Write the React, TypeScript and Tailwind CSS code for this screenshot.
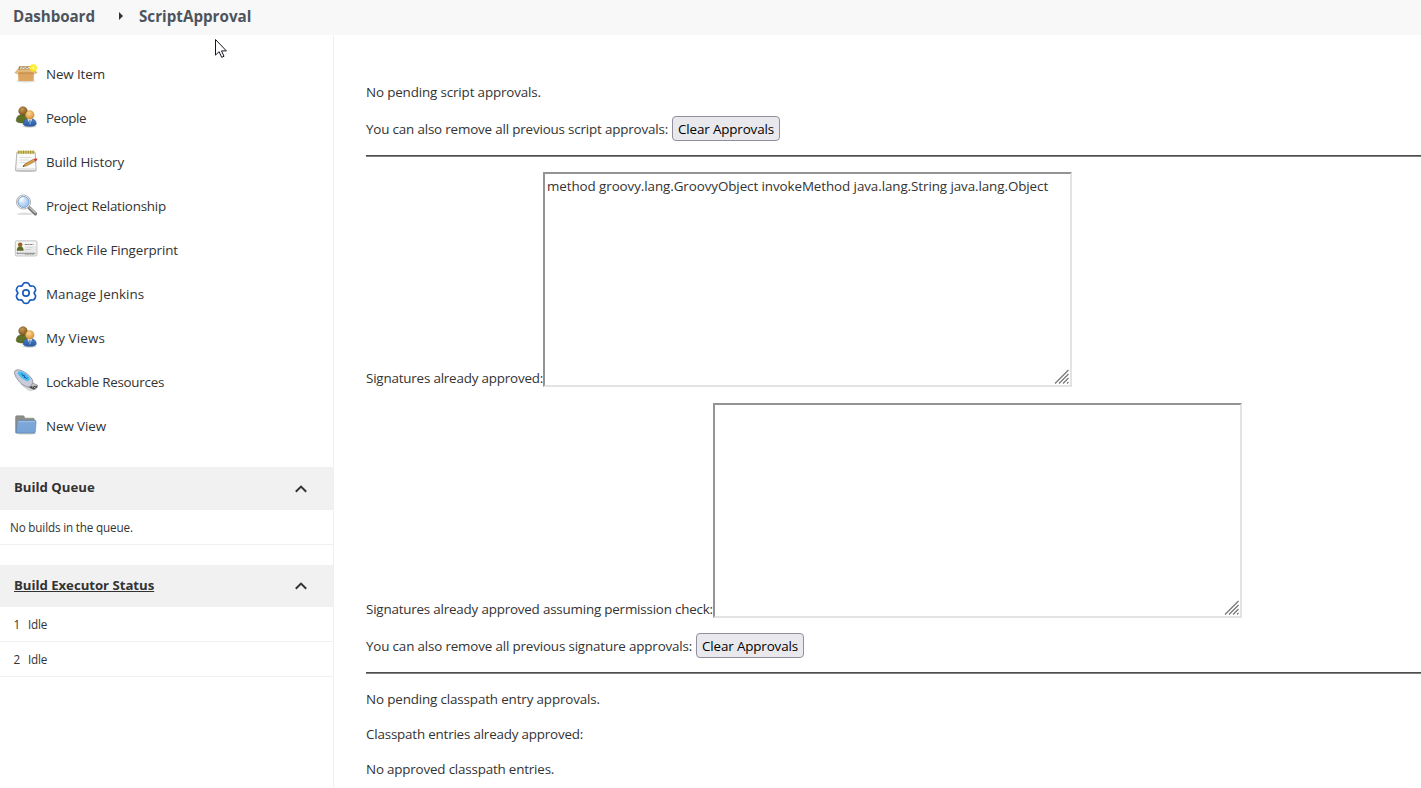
import type { ReactNode } from "react";

function Svg({ children }: { children: ReactNode }) {
  return (
    <svg width="24" height="24" viewBox="0 0 24 24" fill="none" className="shrink-0">
      {children}
    </svg>
  );
}

function BoxIcon() {
  return (
    <Svg>
      <defs>
        <linearGradient id="box" x1="0" y1="0" x2="0" y2="1">
          <stop offset="0" stopColor="#bd8039" />
          <stop offset="0.35" stopColor="#dba563" />
          <stop offset="1" stopColor="#dda75d" />
        </linearGradient>
        <radialGradient id="glow">
          <stop offset="0" stopColor="#fffbb0" />
          <stop offset="0.35" stopColor="#fff04a" />
          <stop offset="0.75" stopColor="#ffe800" stopOpacity="0.8" />
          <stop offset="1" stopColor="#ffe800" stopOpacity="0" />
        </radialGradient>
      </defs>
      <ellipse cx="12" cy="20.200" rx="9.500" ry="1.200" fill="#000" opacity="0.14" />
      <path d="M5.200 5.300h13.600l1.500 4H3.700z" fill="#b9853f" />
      <path d="M6.700 5.900h10.600l.8 2.700H5.900z" fill="#e6e2d5" />
      <path d="M7.500 7.500l2-1.200 1.600 1.200 2-1.200 1.800 1.200" stroke="#75684f" strokeWidth="0.7" />
      <path d="M4 10.500h16l-.3 8.800a.8.800 0 0 1-.8.700H5.100a.8.800 0 0 1-.8-.7z" fill="url(#box)" />
      <path d="M3.800 8.500h16.400l3 3.300-2.800 1-1.800-1.400H5.400l-1.800 1.400-2.800-1z" fill="#e5b97d" stroke="#c48f4b" strokeWidth="0.4" />
      <circle cx="19.300" cy="6.900" r="4.300" fill="url(#glow)" />
    </Svg>
  );
}

function PeopleIcon() {
  return (
    <Svg>
      <defs>
        <radialGradient id="headBack" cx="0.4" cy="0.3" r="0.7">
          <stop offset="0" stopColor="#c39a54" />
          <stop offset="1" stopColor="#7e541b" />
        </radialGradient>
        <radialGradient id="headFront" cx="0.4" cy="0.3" r="0.7">
          <stop offset="0" stopColor="#ffd88f" />
          <stop offset="1" stopColor="#d8913a" />
        </radialGradient>
        <linearGradient id="suit" x1="0" y1="0" x2="0" y2="1">
          <stop offset="0" stopColor="#4b7fc6" />
          <stop offset="1" stopColor="#2859a0" />
        </linearGradient>
      </defs>
      <ellipse cx="15.500" cy="21.500" rx="7" ry="1.200" fill="#000" opacity="0.18" />
      <path d="M2.300 15.700c0-3.800 2-6 6-6 4.300 0 6.500 2 6.500 6 0 1.200-2.500 2.200-6.200 2.200s-6.300-1-6.300-2.200z" fill="#5f7027" stroke="#46551a" strokeWidth="0.6" />
      <circle cx="9" cy="6" r="4.300" fill="url(#headBack)" stroke="#75501d" strokeWidth="0.5" />
      <path d="M9.200 19c0-3.500 2.300-5.400 6.500-5.400s6.500 1.900 6.500 5.400c0 1.400-2.700 2.300-6.500 2.300S9.200 20.400 9.200 19z" fill="url(#suit)" stroke="#2d5794" strokeWidth="0.6" />
      <path d="M13.300 13.500h5l-2.300 6.200z" fill="#eef4fc" />
      <path d="M15.300 15h1.200l.3 3-.9 1.500L15 18z" fill="#4b83c9" />
      <circle cx="15.800" cy="9.900" r="4.300" fill="url(#headFront)" stroke="#c08433" strokeWidth="0.4" />
    </Svg>
  );
}

function NotepadIcon() {
  return (
    <Svg>
      <ellipse cx="12" cy="22" rx="10.300" ry="1" fill="#000" opacity="0.2" />
      <path d="M2.800 3.500h18.400l1 17.500a.7.700 0 0 1-.8.800H2.300a.7.700 0 0 1-.8-.8z" fill="#e6e6e6" stroke="#a7a7a7" strokeWidth="0.8" />
      <path d="M3.500 5h17l.8 14H2.700z" fill="#fafafa" />
      <path d="M3.500 1.800h17v2.700h-17z" fill="#d2c25e" />
      <path d="M4.700 1.500v3.400M7.100 1.500v3.400M9.500 1.500v3.400M11.900 1.500v3.400M14.300 1.500v3.400M16.700 1.500v3.400M19.100 1.500v3.400" stroke="#978a30" strokeWidth="0.8" />
      <path d="M5.500 8.500h12M5.500 11h9M5.500 13.500h6" stroke="#d3d3d3" strokeWidth="0.8" />
      <path d="M9 17.500l2-2.700 8.800-4.700 1.500 2.200-8.800 4.500z" fill="#dba144" stroke="#8a6429" strokeWidth="0.6" />
      <path d="M19.300 10.400l2.200-1.100c1-.5 2.400 1.300 1.500 2l-2.200 1.300z" fill="#dc3d30" />
      <path d="M18.500 10.800l1-.5 1.500 2.100-1 .6z" fill="#b4b8bb" />
      <path d="M8.600 17.800l1.200-1.600 1.100.9z" fill="#332d22" />
    </Svg>
  );
}

function SearchIcon() {
  return (
    <Svg>
      <defs>
        <radialGradient id="lens" cx="0.35" cy="0.3" r="0.8">
          <stop offset="0" stopColor="#f3f9ff" />
          <stop offset="0.5" stopColor="#bdd8f7" />
          <stop offset="1" stopColor="#98c0ef" />
        </radialGradient>
      </defs>
      <ellipse cx="11" cy="20.800" rx="8.500" ry="1.300" fill="#000" opacity="0.13" />
      <path d="M15.200 14.700l6.200 6" stroke="#757575" strokeWidth="3.400" strokeLinecap="round" />
      <path d="M15.900 14.800l5.300 5" stroke="#c2c2c2" strokeWidth="1.300" strokeLinecap="round" />
      <circle cx="9.500" cy="9" r="7.100" fill="#ededed" stroke="#a4a5a7" strokeWidth="0.8" />
      <circle cx="9.500" cy="9" r="5.500" fill="url(#lens)" stroke="#6993c5" strokeWidth="0.8" />
      <path d="M6 8.500c.3-2.200 1.600-3.200 3.800-3.300" stroke="#fff" strokeWidth="1.200" />
    </Svg>
  );
}

function FingerprintIcon() {
  return (
    <Svg>
      <rect x="1.300" y="3.800" width="21.700" height="15.200" rx="1.300" fill="#e9e9e9" stroke="#bcbcbc" strokeWidth="0.8" />
      <path d="M2.200 4.700h20v4L2.200 13.200z" fill="#fff" opacity="0.6" />
      <path d="M2.800 13.800c0-3.200 1-4.200 3.400-4.200s3.400 1 3.400 4.200z" fill="#5c6b22" />
      <circle cx="6.200" cy="7.700" r="2.300" fill="#9a6424" />
      <path d="M10.800 7.500h8.700" stroke="#888" strokeWidth="1" strokeDasharray="2.200 .4" />
      <path d="M11 10.200h7.500M11 12.500h6" stroke="#ccc" strokeWidth="0.8" />
      <path d="M3 16.300h18.400" stroke="#777" strokeWidth="0.8" />
      <path d="M3.300 15.400v1.800M11 17.200h9.500" stroke="#777" strokeWidth="0.8" strokeDasharray="1.700 .7" />
    </Svg>
  );
}

const gearTooth = "M7.850 4.810C8.700 4.320 8.850 3.900 9.100 3.100C9.450 1.900 10.200 1.600 12 1.600C13.800 1.600 14.550 1.900 14.900 3.100C15.150 3.900 15.300 4.320 16.150 4.810";

function GearIcon() {
  return (
    <Svg>
      <g stroke="#1b5dbb" strokeWidth="1.700" strokeLinecap="round" strokeLinejoin="round">
        <path d={gearTooth} />
        <path d={gearTooth} transform="rotate(60 12 12)" />
        <path d={gearTooth} transform="rotate(120 12 12)" />
        <path d={gearTooth} transform="rotate(180 12 12)" />
        <path d={gearTooth} transform="rotate(240 12 12)" />
        <path d={gearTooth} transform="rotate(300 12 12)" />
        <circle cx="12" cy="12" r="3.200" />
      </g>
    </Svg>
  );
}

function UsbIcon() {
  return (
    <Svg>
      <path d="M6 15l8 6.500c2 1.200 4 .8 5-.3l-5-4.500z" fill="#000" opacity="0.16" />
      <path d="M14.600 15.200l3.700-1.500 5.300 2.600c.2 1.900-1.300 3.900-3.800 4.600l-5.700-3.100z" fill="#c4c5c6" stroke="#77797b" strokeWidth="0.6" />
      <path d="M16 17.200l7-.5.2 1.500-3.400 2.200-4.200-2z" fill="#454749" />
      <path d="M18.200 18.200l1.200-.6M20.300 18.700l1.200-.7" stroke="#ddd" />
      <path d="M.6 2.700C1 .8 3.600.5 6.500 1.200c4 1.200 9.700 5.300 11.800 9.300.8 1.600.5 4.300-1 5.900-1.400 1.700-3.600 1.900-5.400 1.100C6.200 15 2.200 9.500.9 5.500.5 4.500.4 3.500.6 2.700z" fill="#c9ccd8" stroke="#858896" strokeWidth="0.8" />
      <path d="M4 3.300c1-1.300 3.300-1 5.200-.1 2.700 1.300 5.400 3.800 6.600 6 .5 1-.3 2.200-1.600 2.600-1 .4-2 .1-3-.5-3.200-1.800-6.200-4.500-7.200-6.600-.2-.6-.3-1 0-1.400z" fill="#44b9f2" stroke="#6fcdf7" strokeWidth="0.6" />
      <path d="M7.300 4.700l5.800 5.300M8.300 6.700l2.500-.5M10.500 9V7M12 9.900l1.400-1.300" stroke="#155f9e" strokeWidth="0.9" />
    </Svg>
  );
}

function FolderIcon() {
  return (
    <Svg>
      <defs>
        <linearGradient id="folder" x1="0" y1="0" x2="0" y2="1">
          <stop offset="0" stopColor="#7fa9d8" />
          <stop offset="1" stopColor="#76a2d6" />
        </linearGradient>
      </defs>
      <ellipse cx="12" cy="20.600" rx="10.500" ry="0.900" fill="#000" opacity="0.2" />
      <path d="M1.600 19.700V4c0-.7.500-1.200 1.300-1.200h6c.8 0 1.200.4 1.500 1.200l.4 1.200h8.300c.8 0 1.300.5 1.300 1.300v13.200z" fill="#8b8d88" stroke="#7e807b" strokeWidth="0.6" />
      <path d="M2.400 20l.9-11.300c.1-.8.500-1.100 1.200-1.100h16.700c.7 0 1 .4.900 1.100l-.8 10.200c-.1.700-.5 1.100-1.100 1.100z" fill="url(#folder)" stroke="#5685bd" strokeWidth="0.6" />
      <path d="M4 9c0-.3.300-.5.600-.5h16.500" stroke="#a9c8ea" strokeWidth="0.7" />
    </Svg>
  );
}

const tasks = [
  { label: "New Item", icon: <BoxIcon />, tracking: "tracking-[-0.117px]" },
  { label: "People", icon: <PeopleIcon />, tracking: "tracking-[-0.45px]" },
  { label: "Build History", icon: <NotepadIcon />, tracking: "tracking-[-0.15px]" },
  { label: "Project Relationship", icon: <SearchIcon />, tracking: "tracking-[-0.22px]" },
  { label: "Check File Fingerprint", icon: <FingerprintIcon />, tracking: "tracking-[-0.12px]" },
  { label: "Manage Jenkins", icon: <GearIcon />, tracking: "tracking-[0.03px]" },
  { label: "My Views", icon: <PeopleIcon />, tracking: "tracking-[0.13px]" },
  { label: "Lockable Resources", icon: <UsbIcon />, tracking: "tracking-[-0.26px]" },
  { label: "New View", icon: <FolderIcon />, tracking: "tracking-[-0.1px]" },
];

function Chevron() {
  return (
    <svg width="14" height="10" viewBox="0 0 14 10" fill="none">
      <path d="M1.800 7.800L7 2.600l5.200 5.200" stroke="#333" strokeWidth="2" />
    </svg>
  );
}

function ClearButton() {
  return (
    <button className="ml-1 flex h-[25px] w-[108px] items-center justify-center rounded-[4px] border border-[#8f8f9d] bg-[#e9e9ed] pt-px tracking-[-0.137px] whitespace-nowrap text-black">
      Clear Approvals
    </button>
  );
}

function SignatureBox({ children }: { children?: ReactNode }) {
  return (
    <div className="flex h-[215px] w-[529px] shrink-0 flex-col justify-between border-2 border-t-[#949494] border-r-[#e3e3e3] border-b-[#e3e3e3] border-l-[#949494] bg-white">
      <div className="h-6 px-0.5 pt-[2px] leading-5 tracking-[-0.082px] whitespace-nowrap">{children}</div>
      <svg width="16" height="16" viewBox="0 0 16 16" className="self-end">
        <path d="M1 14.500L14.500 1M5 14.500L14.500 5M9 14.500L14.500 9M13 14.500l1.500-1.500" stroke="#777" strokeWidth="1.200" />
      </svg>
    </div>
  );
}

function Divider() {
  return <hr className="mt-[14px] h-[2px] border-t border-b border-t-[#4d4d4d] border-b-[#808080]" />;
}

export default function App() {
  return (
    <div className="relative flex h-[788px] w-[1421px] flex-col overflow-hidden bg-white font-['Open_Sans',sans-serif] text-[13.4px] leading-5 text-[#333]">
      <header className="flex h-[35px] shrink-0 items-center bg-[#f8f8f8] pb-[3px] pl-[13px] text-[15.2px] font-bold text-[#4d545d]">
        <span className="w-[105px] tracking-[-0.08px]">Dashboard</span>
        <svg width="6" height="8" viewBox="0 0 6 8" className="mr-[15px] mb-px">
          <path d="M1 0l4 4-4 4z" fill="#333" />
        </svg>
        <span>ScriptApproval</span>
      </header>

      <div className="flex min-h-0 flex-1">
        <aside className="w-[334px] shrink-0 border-r border-[#f0f0f0] pt-[17px]">
          <nav className="mb-[19px]">
            {tasks.map((t) => (
              <a key={t.label} className="flex h-11 items-center gap-2 pl-[14px]">
                <span className="pb-[3px]">{t.icon}</span>
                <span className={t.tracking}>{t.label}</span>
              </a>
            ))}
          </nav>

          <section className="mb-5 text-[11.7px]">
            <div className="flex h-[43px] items-center justify-between bg-[#f1f1f1] pr-[25px] pl-[14px]">
              <h2 className="pb-[3px] text-[13.2px] font-bold">Build Queue</h2>
              <Chevron />
            </div>
            <div className="flex h-[35px] items-center border-b border-[#f0f0f0] pl-[10px] tracking-[-0.165px]">
              No builds in the queue.
            </div>
          </section>

          <section className="text-[11.7px]">
            <div className="flex h-[42px] items-center justify-between bg-[#f1f1f1] pr-[25px] pl-[14px]">
              <h2 className="pb-[2px] text-[13.2px] font-bold tracking-[-0.03px] underline decoration-1 underline-offset-1">
                Build Executor Status
              </h2>
              <Chevron />
            </div>
            {["1", "2"].map((n) => (
              <div key={n} className="flex h-[35px] items-center border-b border-[#f0f0f0] pl-[13.5px]">
                <span className="w-[14.5px]">{n}</span>
                <span className="tracking-[-0.24px]">Idle</span>
              </div>
            ))}
          </section>
        </aside>

        <main className="flex min-w-0 flex-1 flex-col pt-[47px] pl-8 whitespace-nowrap">
          <p className="tracking-[-0.143px]">No pending script approvals.</p>
          <div className="mt-[14px] flex h-[25px] items-center">
            <span className="w-[302px] tracking-[-0.17px]">You can also remove all previous script approvals:</span>
            <ClearButton />
          </div>
          <Divider />
          <div className="mt-[15px] flex items-end">
            <span className="-mb-px w-[177px] tracking-[-0.19px]">Signatures already approved:</span>
            <SignatureBox>method groovy.lang.GroovyObject invokeMethod java.lang.String java.lang.Object</SignatureBox>
          </div>
          <div className="mt-4 flex items-end">
            <span className="-mb-px w-[347px] tracking-[-0.195px]">Signatures already approved assuming permission check:</span>
            <SignatureBox />
          </div>
          <div className="mt-[15px] flex h-[25px] items-center">
            <span className="w-[326px] tracking-[-0.16px]">You can also remove all previous signature approvals:</span>
            <ClearButton />
          </div>
          <Divider />
          <p className="mt-[15px] tracking-[-0.14px]">No pending classpath entry approvals.</p>
          <p className="mt-[15px] tracking-[-0.19px]">Classpath entries already approved:</p>
          <p className="mt-[15px] tracking-[-0.185px]">No approved classpath entries.</p>
        </main>
      </div>

      <svg width="14" height="21" viewBox="0 0 14 21" className="absolute top-[38px] left-[214px]">
        <path d="M1.500 1.500v15.600l3.600-3.400 2.600 5.600 2.300-1-2.500-5.400h4.900z" fill="#fff" stroke="#15151f" strokeWidth="1" />
      </svg>
    </div>
  );
}
